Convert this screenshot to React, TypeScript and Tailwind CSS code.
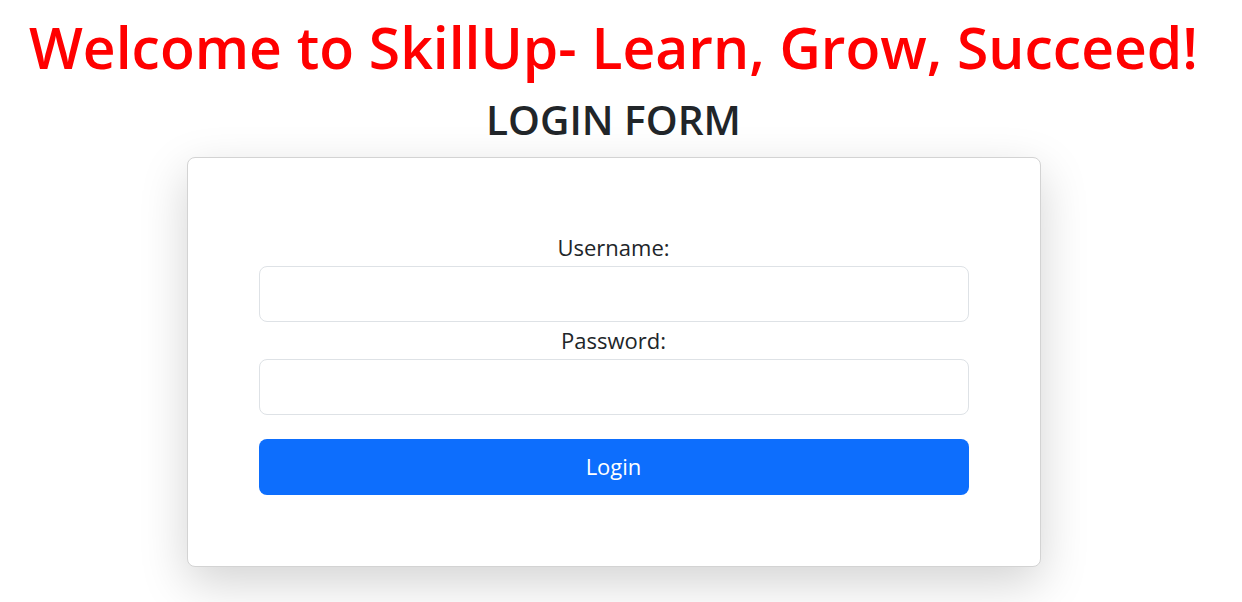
const LoginPage = () => {
  return (
    <div className="min-h-screen bg-white pr-[15px] font-['Open_Sans',sans-serif] text-[#212529]">
      <h1 className="pt-[13px] text-center text-[57px] leading-[1.2] font-semibold text-[#ff0000]">
        Welcome to SkillUp- Learn, Grow, Succeed!
      </h1>
      <h2 className="mt-[15px] text-center text-[40.6px] leading-[1.2] font-semibold">
        LOGIN FORM
      </h2>
      <div className="mx-auto mt-[12px] w-[854px] rounded-lg border border-[#d3d3d3] bg-white px-[71px] pt-[76px] pb-[71px] shadow-[0_1rem_3rem_rgba(0,0,0,0.175)]">
        <form className="flex flex-col" onSubmit={(e) => e.preventDefault()}>
          <label htmlFor="username" className="text-center text-[22px] leading-[1.2]">
            Username:
          </label>
          <input
            id="username"
            type="text"
            className="mt-[6px] h-[56px] w-full rounded-lg border border-[#dee2e6] px-4 text-[20px] outline-none"
          />
          <label htmlFor="password" className="mt-[5px] text-center text-[22px] leading-[1.2]">
            Password:
          </label>
          <input
            id="password"
            type="password"
            className="mt-[5px] h-[56px] w-full rounded-lg border border-[#dee2e6] px-4 text-[20px] outline-none"
          />
          <button
            type="submit"
            className="mt-[24px] h-[56px] w-full rounded-lg bg-[#0d6efd] text-[22px] text-white"
          >
            Login
          </button>
        </form>
      </div>
    </div>
  );
};

export default function App() {
  return <LoginPage />;
}
